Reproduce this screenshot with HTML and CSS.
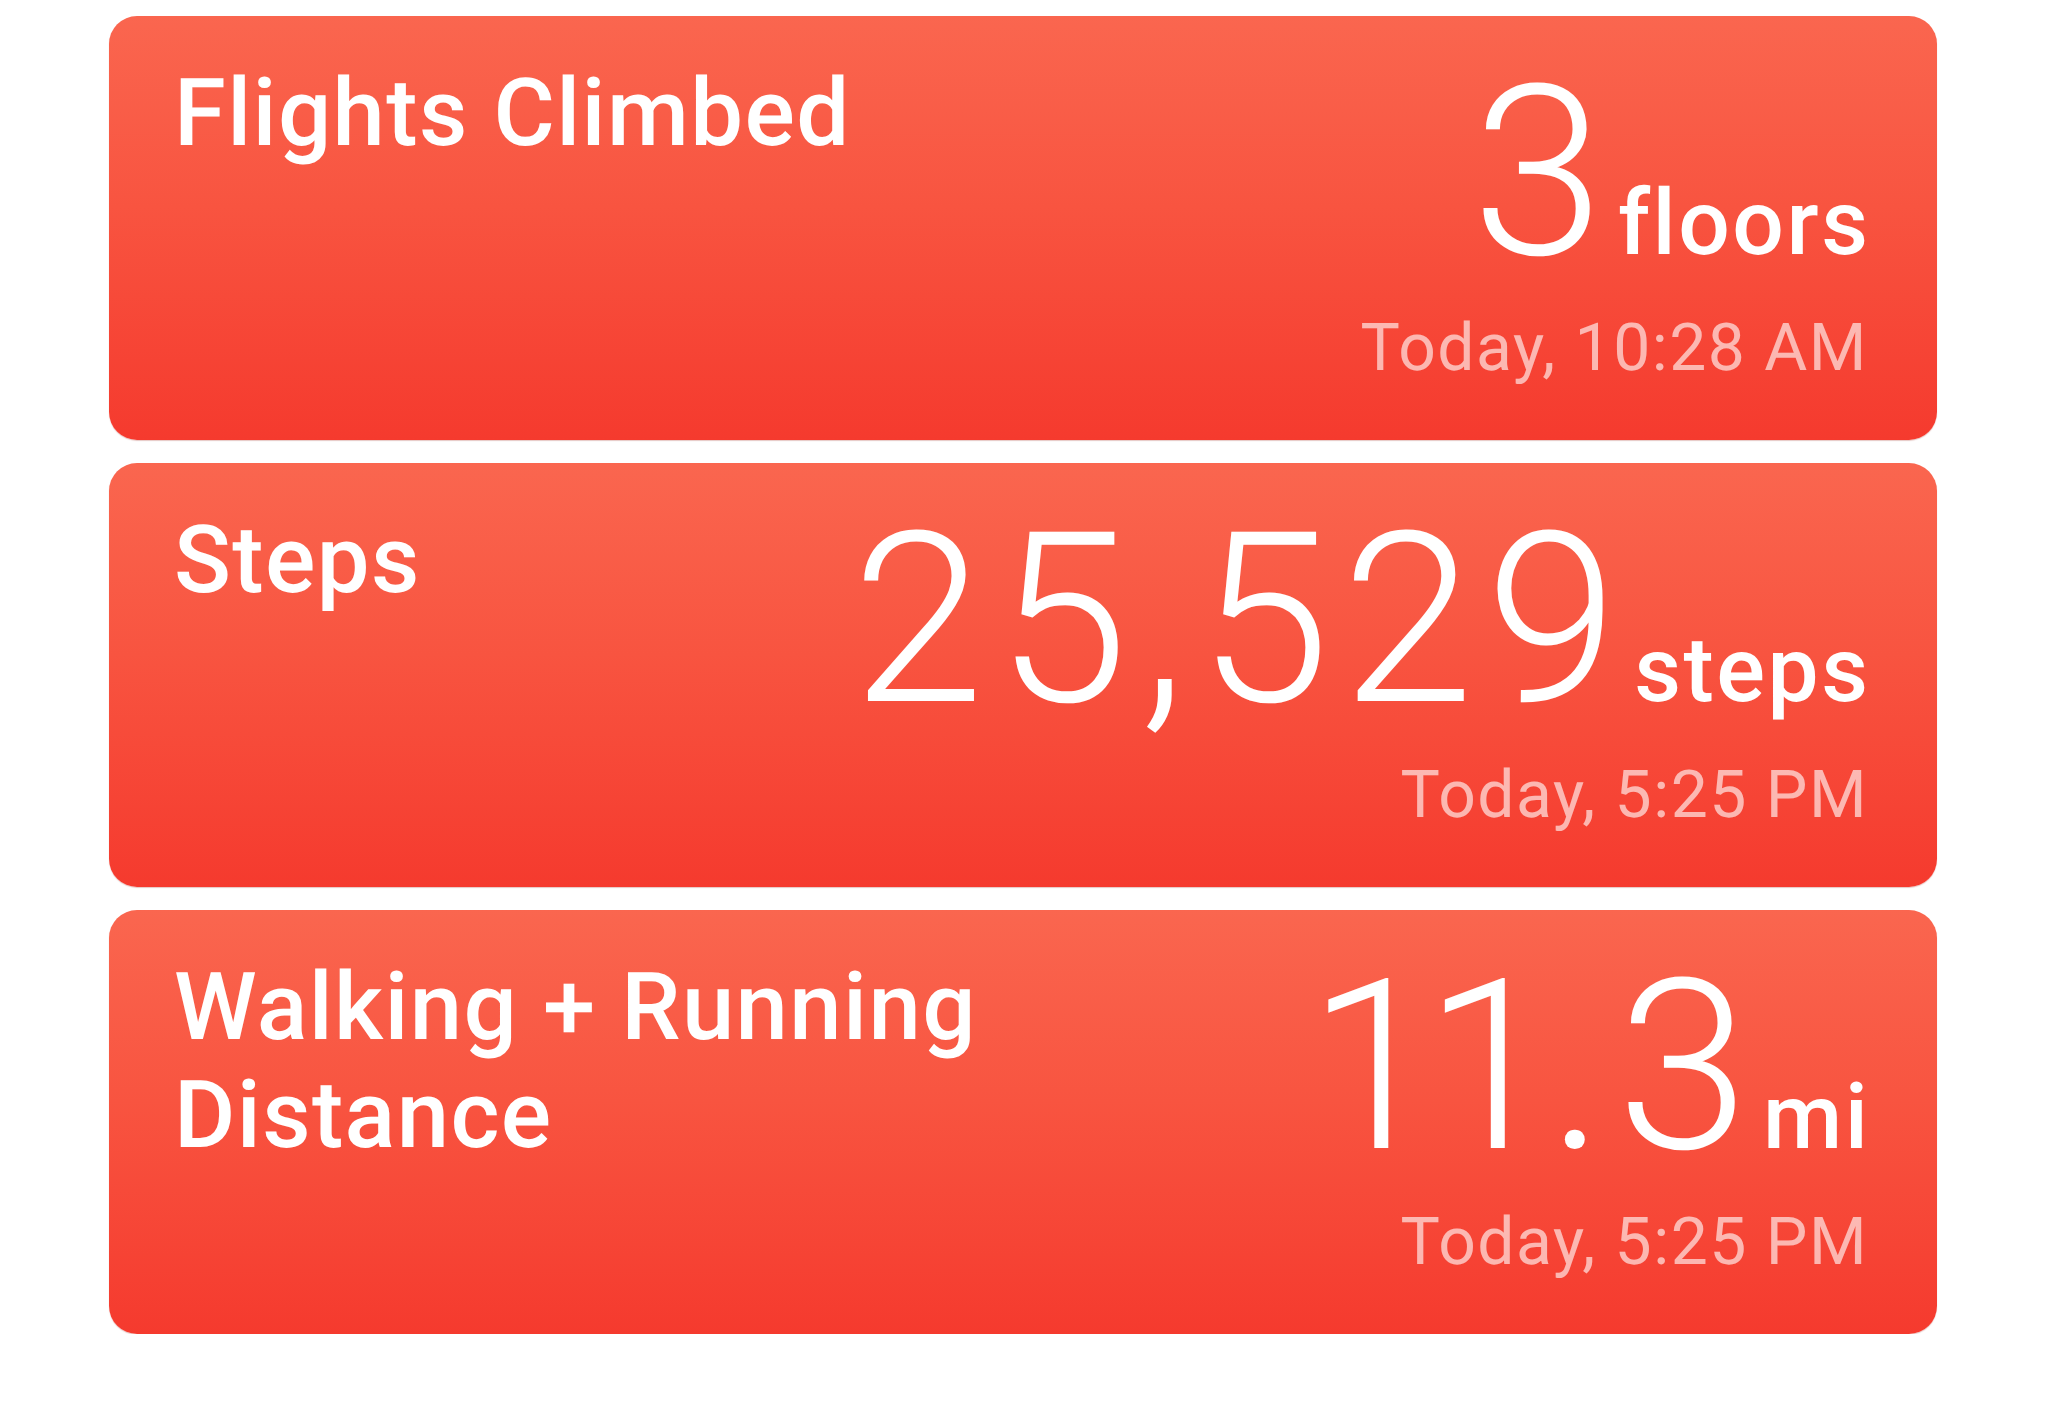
FILE: index.html
```html
<!DOCTYPE html>
<html lang="en">
<head>
<meta charset="utf-8">
<title>Health</title>
<link rel="stylesheet" href="styles.css">
</head>
<body>
<main class="list">
  <section class="card">
    <h2 class="title">Flights Climbed</h2>
    <div class="data">
      <div class="value"><span class="num">3</span><span class="unit">floors</span></div>
      <div class="time">Today, 10:28 AM</div>
    </div>
  </section>
  <section class="card">
    <h2 class="title">Steps</h2>
    <div class="data">
      <div class="value"><span class="num">25,529</span><span class="unit">steps</span></div>
      <div class="time">Today, 5:25 PM</div>
    </div>
  </section>
  <section class="card">
    <h2 class="title">Walking + Running Distance</h2>
    <div class="data">
      <div class="value"><span class="num">11.3</span><span class="unit">mi</span></div>
      <div class="time">Today, 5:25 PM</div>
    </div>
  </section>
</main>
</body>
</html>
```

FILE: styles.css
```css
html, body {
  margin: 0;
  padding: 0;
  background: #ffffff;
}

body {
  font-family: Roboto, "Liberation Sans", sans-serif;
  color: #ffffff;
  text-rendering: geometricPrecision;
  -webkit-font-smoothing: antialiased;
}

.list {
  display: flex;
  flex-direction: column;
  gap: 23px;
  padding: 16px 111px 0 109px;
}

.card {
  display: flex;
  justify-content: space-between;
  align-items: flex-start;
  height: 424px;
  box-sizing: border-box;
  padding: 32px 69px 0 65px;
  border-radius: 28px;
  background: linear-gradient(180deg, #fa664f 0%, #f85440 45%, #f53a2e 100%);
  box-shadow: 0 1px 1px rgba(150, 30, 20, 0.25);
}

.title {
  margin: 11px 0 0 0;
  max-width: 900px;
  font-size: 94px;
  line-height: 108px;
  font-weight: 500;
  letter-spacing: 1.4px;
}

.data {
  display: flex;
  flex-direction: column;
  align-items: flex-end;
}

.value {
  display: flex;
  align-items: baseline;
  gap: 14px;
  margin-top: 7px;
  line-height: 1;
}

.num {
  font-size: 238px;
  font-weight: 300;
  line-height: 238px;
  letter-spacing: 12px;
  margin-right: -12px;
  font-variant-numeric: proportional-nums;
}

.unit {
  font-size: 91px;
  font-weight: 500;
  letter-spacing: 2.5px;
  margin-right: -2.5px;
}

.time {
  margin-top: 16px;
  font-size: 66px;
  line-height: 80px;
  font-weight: 400;
  letter-spacing: 1.5px;
  color: rgba(255, 255, 255, 0.62);
}
```
